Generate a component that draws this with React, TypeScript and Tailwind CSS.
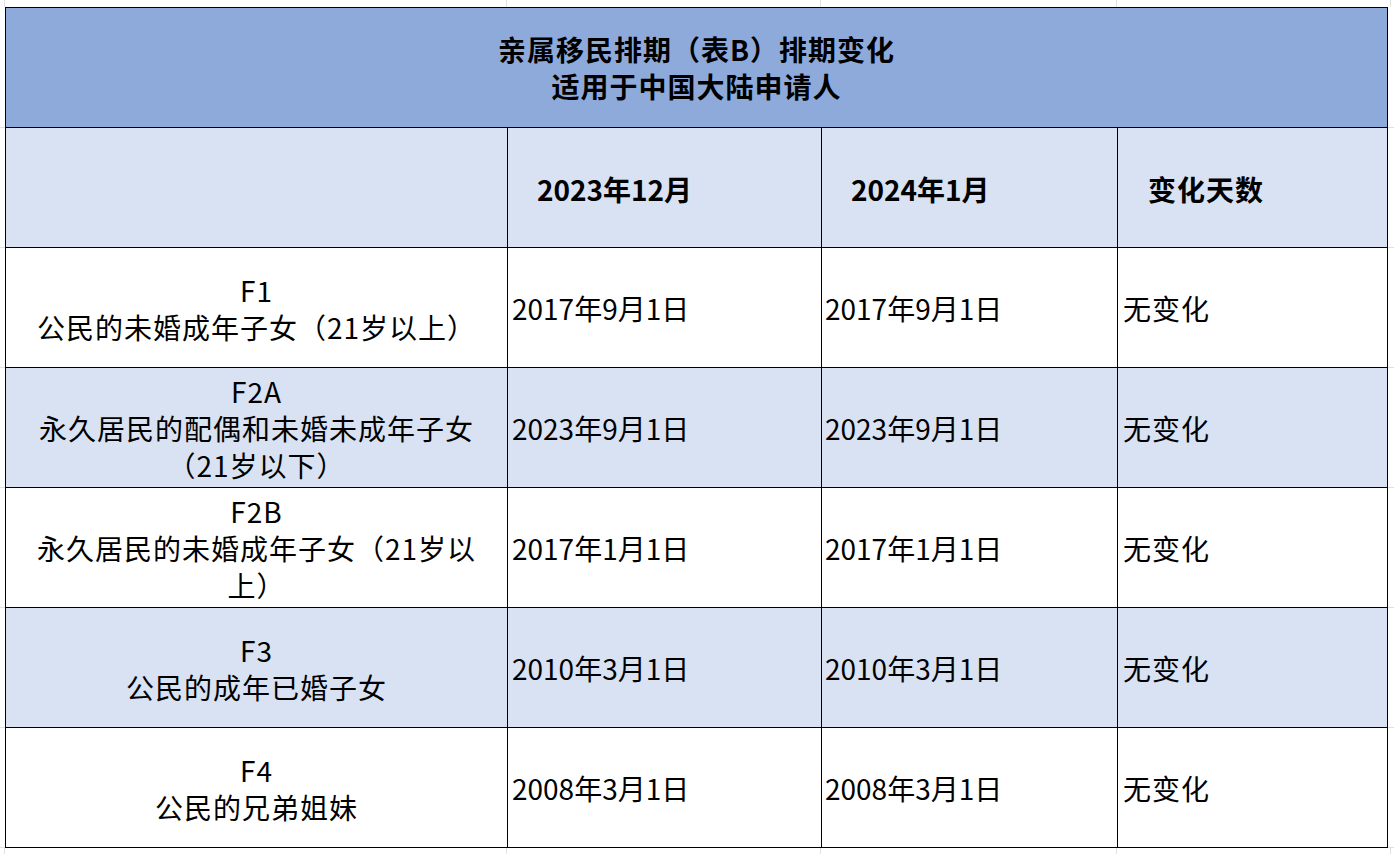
const rows = [
  { code: "F1", desc: ["公民的未婚成年子女（21岁以上）"], prev: "2017年9月1日", cur: "2017年9月1日", alt: false },
  { code: "F2A", desc: ["永久居民的配偶和未婚未成年子女", "（21岁以下）"], prev: "2023年9月1日", cur: "2023年9月1日", alt: true },
  { code: "F2B", desc: ["永久居民的未婚成年子女（21岁以", "上）"], prev: "2017年1月1日", cur: "2017年1月1日", alt: false },
  { code: "F3", desc: ["公民的成年已婚子女"], prev: "2010年3月1日", cur: "2010年3月1日", alt: true },
  { code: "F4", desc: ["公民的兄弟姐妹"], prev: "2008年3月1日", cur: "2008年3月1日", alt: false },
];

const font = "font-['Noto_Sans_CJK_SC',sans-serif]";

function FaintRows({ count }: { count: number }) {
  return (
    <div className="flex flex-col">
      <div className="h-[120px] border-b border-[#e1e1e1]" />
      {Array.from({ length: count }).map((_, i) => (
        <div key={i} className="h-[120px] border-b border-[#e1e1e1]" />
      ))}
    </div>
  );
}

function FaintCols() {
  return (
    <div className="flex h-[7px]">
      <div className="w-[5px] border-r border-[#e1e1e1]" />
      <div className="w-[502px] border-r border-[#e1e1e1]" />
      <div className="w-[314px] border-r border-[#e1e1e1]" />
      <div className="w-[296px] border-r border-[#e1e1e1]" />
      <div className="w-[274px] border-r border-[#e1e1e1]" />
    </div>
  );
}

export default function App() {
  return (
    <div className={`w-[1394px] h-[854px] bg-white text-black overflow-hidden ${font}`}>
      <FaintCols />
      <div className="flex">
        <div className="w-[5px] mt-[1px]">
          <FaintRows count={6} />
        </div>
        <div className="border-l border-t border-black">
          <div className="h-[120px] border-r border-b border-black bg-[#8eaadb] flex flex-col items-center justify-center pt-[1px] text-[28px] leading-[37px] font-bold tracking-[1px] w-[1382px]">
            <div>亲属移民排期（表B）排期变化</div>
            <div>适用于中国大陆申请人</div>
          </div>
          <div className="flex h-[120px] bg-[#d9e2f3] text-[28px] font-bold">
            <div className="w-[502px] border-r border-b border-black" />
            <div className="w-[314px] border-r border-b border-black flex items-center pl-[29px] pt-[3px]">2023年12月</div>
            <div className="w-[296px] border-r border-b border-black flex items-center pl-[29px] pt-[3px]">2024年1月</div>
            <div className="w-[270px] border-r border-b border-black flex items-center pl-[30px] pt-[3px] tracking-[1px]">变化天数</div>
          </div>
          {rows.map((r) => (
            <div
              key={r.code}
              className={`flex h-[120px] text-[28px] leading-[37px] ${r.alt ? "bg-[#d9e2f3]" : "bg-white"}`}
            >
              <div className="w-[502px] border-r border-b border-black flex flex-col items-center justify-center pt-[2px] whitespace-nowrap tracking-[1px]">
                <div>{r.code}</div>
                {r.desc.map((d) => (
                  <div key={d}>{d}</div>
                ))}
              </div>
              <div className="w-[314px] border-r border-b border-black flex items-center pl-[4px] pt-[1px]">{r.prev}</div>
              <div className="w-[296px] border-r border-b border-black flex items-center pl-[3px] pt-[1px]">{r.cur}</div>
              <div className="w-[270px] border-r border-b border-black flex items-center pl-[5px] pt-[1px] tracking-[1px]">无变化</div>
            </div>
          ))}
        </div>
        <div className="w-[6px] mt-[1px]">
          <FaintRows count={6} />
        </div>
      </div>
      <FaintCols />
    </div>
  );
}
